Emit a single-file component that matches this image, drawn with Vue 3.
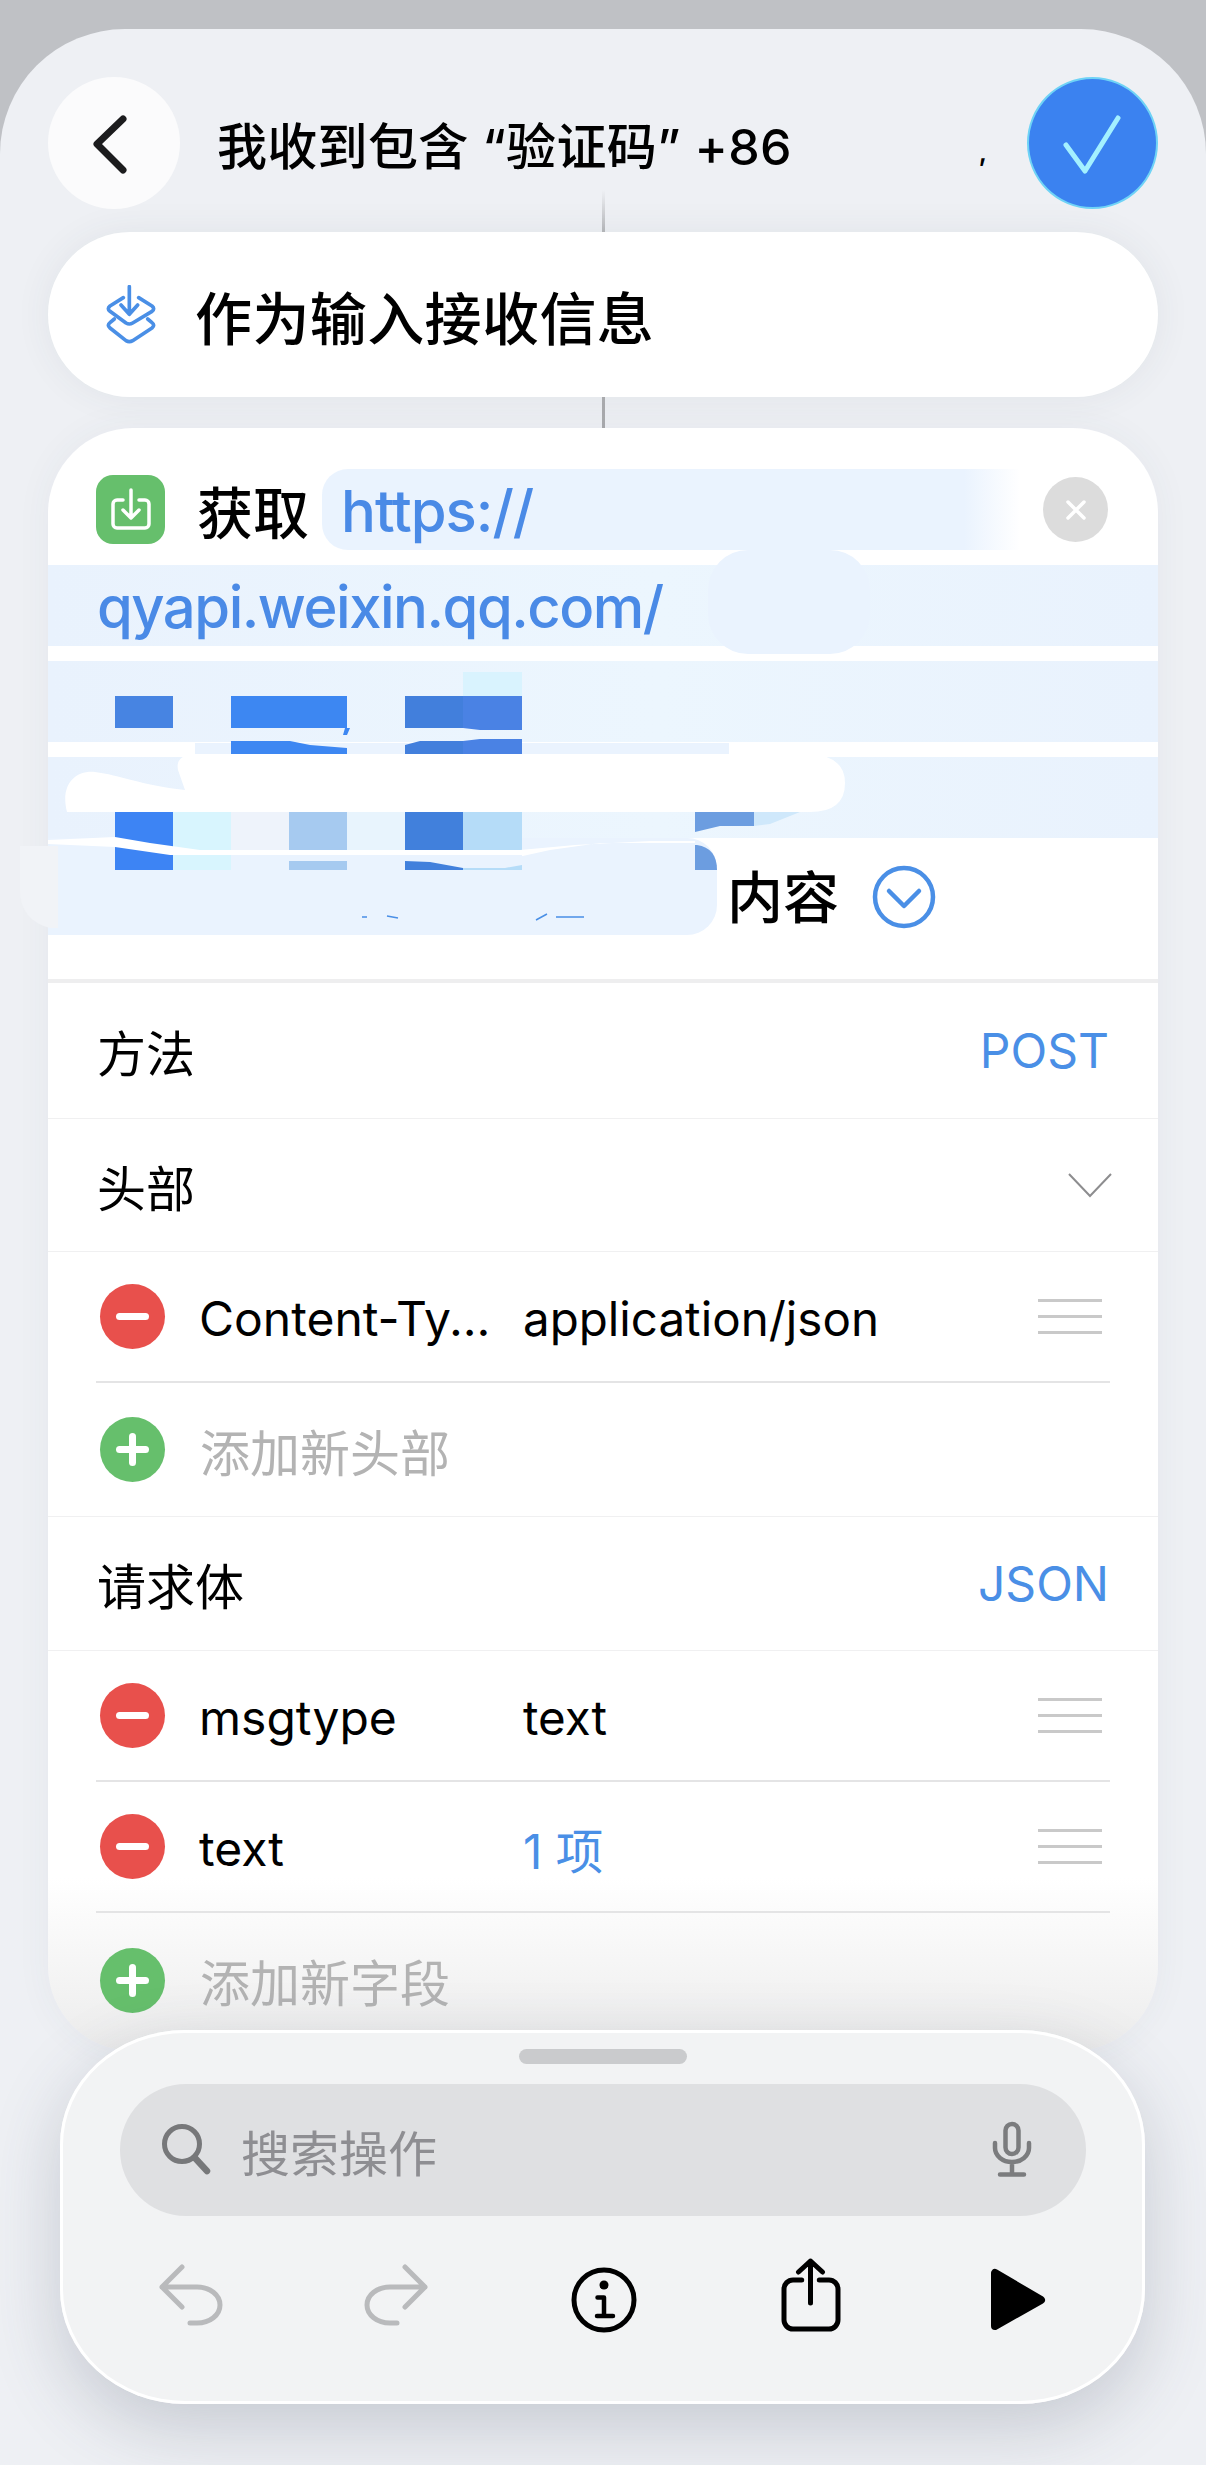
<template>
  <div class="page">
    <div class="panel">
      <header class="top">
        <button class="back">
          <svg width="44" height="64" viewBox="0 0 44 64"><path d="M31 8 5 33l26 26" class="line dark" stroke-width="7" /></svg>
        </button>
        <span class="title">我收到包含 “验证码” +86</span>
        <span class="mark">,</span>
        <button class="done">
          <svg width="70" height="70" viewBox="0 0 70 70"><path d="M8 37 27 63 60 10" class="line check" stroke-width="5" /></svg>
        </button>
      </header>
      <div class="link fade"></div>

      <div class="trigger">
        <svg class="stack" width="50" height="60" viewBox="80 40 150 180">
          <path d="M132 78 92 103q-10 8 0 16l48 35q10 6 20 0l58-35q10-8 0-16l-40-25M150 45v80M125 100l25 28 25-28" class="line blue" stroke-width="11" />
          <path d="M105 142 92 153q-10 8 0 16l48 38q10 6 20 0l58-38q10-8 0-16l-13-11" class="line blue" stroke-width="11" />
        </svg>
        <span>作为输入接收信息</span>
      </div>
      <div class="link"></div>

      <section class="card">
        <div class="url">
          <div class="url-head">
            <span class="app-icon">
              <svg width="46" height="46" viewBox="0 0 46 46">
                <path d="M15 13H9a4 4 0 0 0-4 4v20a4 4 0 0 0 4 4h28a4 4 0 0 0 4-4V17a4 4 0 0 0-4-4h-6M23 3v27M15 23l8 8 8-8" class="line white" stroke-width="3.5" />
              </svg>
            </span>
            <span class="verb">获取</span>
            <div class="pill-url">https://</div>
            <span class="clear">
              <svg width="30" height="30" viewBox="0 0 30 30"><path d="M7 7l16 16M23 7 7 23" class="line white" stroke-width="3.5" /></svg>
            </span>
          </div>
          <div class="band">qyapi.weixin.qq.com/</div>
          <div class="band"></div>
          <div class="band"></div>
          <div class="url-tail">
            <div class="blob"></div>
            <span class="verb tail-word">内容</span>
            <svg class="more" width="64" height="64" viewBox="0 0 64 64">
              <circle cx="32" cy="32" r="29" fill="none" stroke="#4a8fe6" stroke-width="4.5" />
              <path d="M17 26 32 41 47 26" class="line blue" stroke-width="4.5" />
            </svg>
          </div>
          <!-- 打码痕迹，盖在网址上面 -->
          <svg class="redact" width="1206" height="410" viewBox="0 540 1206 410">
            <rect x="708" y="550" width="162" height="104" rx="40" fill="#eaf3fe" />
            <path d="M20 846H58V928H50Q20 920 20 890Z" fill="#f1f3f7" />
            <rect x="195" y="743" width="534" height="12" fill="#eaf3fe" />
            <rect x="463" y="672" width="59" height="24" fill="#d9f3fe" />
            <rect x="115" y="696" width="58" height="32" fill="#4784e2" />
            <path d="M231 696H347V728L350 728 347 735H343L345 728H231Z" fill="#3d87f2" />
            <rect x="405" y="696" width="58" height="32" fill="#427fdc" />
            <path d="M463 696H522V730H480L463 728Z" fill="#4a82e4" />
            <path d="M231 741H290L310 745 347 748V754H231Z" fill="#3d87f2" />
            <path d="M405 745 420 741H463V754H405Z" fill="#427fdc" />
            <path d="M463 741 480 739H522V754H463Z" fill="#4a82e4" />
            <rect x="115" y="812" width="58" height="58" fill="#3d84f4" />
            <rect x="173" y="812" width="58" height="58" fill="#d8f5fe" />
            <rect x="231" y="812" width="58" height="38" fill="#eef3fb" />
            <rect x="289" y="812" width="58" height="58" fill="#a6caf0" />
            <rect x="347" y="812" width="58" height="38" fill="#e8f4fd" />
            <rect x="405" y="812" width="58" height="58" fill="#4180dc" />
            <rect x="463" y="812" width="59" height="58" fill="#b5dcf8" />
            <path d="M695 812H754V826H720L695 832Z" fill="#6c9de0" />
            <path d="M754 812H800L770 824 754 826Z" fill="#cfe8fb" />
            <path d="M695 845H697Q717 848 717 870H695Z" fill="#6c9de0" />
            <path d="M48 840 115 837 150 843 200 850H520L575 845 650 841H695V843H600L550 850 500 861H300V855H170L115 847 48 844Z" fill="#fff" />
            <rect x="231" y="855" width="58" height="15" fill="#eaf3fe" />
            <rect x="289" y="855" width="58" height="6" fill="#eaf3fe" />
            <rect x="347" y="855" width="58" height="15" fill="#eaf3fe" />
            <path d="M405 855H522V865L505 868H463L430 862 405 861Z" fill="#eaf3fe" />
            <path d="M67 812C60 785 75 770 95 772 120 775 140 785 185 790L178 770Q175 755 195 754H810Q845 756 845 783 845 812 810 812Z" fill="#fff" />
            <path d="M362 917h5M387 916l11 2M536 920l11-6M556 917h28" stroke="#4a8fe6" stroke-width="1.5" fill="none" />
          </svg>
        </div>

        <div class="row first">
          <span>方法</span>
          <span class="value">POST</span>
        </div>
        <div class="row">
          <span>头部</span>
          <svg class="fold" width="46" height="28" viewBox="0 0 46 28"><path d="M2 3 23 25 44 3" fill="none" stroke="#8d8d8f" stroke-width="2" /></svg>
        </div>
        <div v-for="h in headers" :key="h.name" class="item">
          <div class="item-in">
            <span class="dot red"><i></i></span>
            <span class="key">{{ h.name }}</span>
            <span class="val">{{ h.value }}</span>
            <span class="grip"><b></b><b></b><b></b></span>
          </div>
        </div>
        <div class="add">
          <span class="dot green"><i></i><i class="v"></i></span>
          <span class="hint">添加新头部</span>
        </div>
        <div class="row body-row">
          <span>请求体</span>
          <span class="value">JSON</span>
        </div>
        <div v-for="f in fields" :key="f.name" class="item">
          <div class="item-in">
            <span class="dot red"><i></i></span>
            <span class="key">{{ f.name }}</span>
            <span class="val" :class="{ link2: f.blue }">{{ f.value }}</span>
            <span class="grip"><b></b><b></b><b></b></span>
          </div>
        </div>
        <div class="add last">
          <span class="dot green"><i></i><i class="v"></i></span>
          <span class="hint">添加新字段</span>
        </div>
      </section>

      <section class="sheet">
        <div class="handle"></div>
        <div class="search">
          <svg width="60" height="60" viewBox="0 0 60 60">
            <circle cx="27" cy="24" r="17.5" fill="none" stroke="#77787a" stroke-width="5" />
            <path d="M40 38 52 51" class="line" stroke="#77787a" stroke-width="6.5" />
          </svg>
          <span class="search-text">搜索操作</span>
          <svg class="mic" width="60" height="60" viewBox="0 0 60 60">
            <rect x="23.5" y="4" width="13" height="30" rx="6.5" fill="none" stroke="#7b7c7e" stroke-width="4.5" />
            <path d="M13 23v5a17 14 0 0 0 34 0v-5M30 43v11M18 54.5h24" class="line" stroke="#7b7c7e" stroke-width="4.5" />
          </svg>
        </div>
        <div class="tools">
          <svg width="80" height="80" viewBox="0 0 80 80">
            <path d="M32 9 12 29l20 20M12 29h35c13 0 23 8 23 18s-10 18-23 18h-7" class="line gray" stroke-width="5" />
          </svg>
          <svg width="80" height="80" viewBox="0 0 80 80">
            <path d="M48 9l20 20-20 20M68 29H33C20 29 10 37 10 47s10 18 23 18h7" class="line gray" stroke-width="5" />
          </svg>
          <svg width="80" height="80" viewBox="0 0 80 80">
            <circle cx="40" cy="42" r="30" fill="none" stroke="#000" stroke-width="5" />
            <circle cx="40" cy="27" r="4.5" fill="#000" />
            <path d="M33.5 39.5H40V58M33 58H49" class="line black" stroke-width="4.5" />
          </svg>
          <svg width="80" height="80" viewBox="0 0 80 80">
            <path d="M30.7 22H22a9 9 0 0 0-9 9v31a9 9 0 0 0 9 9h36a9 9 0 0 0 9-9V31a9 9 0 0 0-9-9h-9.7M39.5 3v42M27.5 14l12-11 12 11" class="line black" stroke-width="5" />
          </svg>
          <svg width="80" height="80" viewBox="0 0 80 80">
            <path d="M17 15V68L63 42Z" fill="#000" stroke="#000" stroke-width="8" stroke-linejoin="round" />
          </svg>
        </div>
      </section>
    </div>
  </div>
</template>

<script setup>
const headers = [{ name: 'Content-Ty...', value: 'application/json' }]
const fields = [
  { name: 'msgtype', value: 'text' },
  { name: 'text', value: '1 项', blue: true },
]
</script>

<style scoped>
.page {
  width: 1206px;
  height: 2465px;
  padding-top: 29px;
  box-sizing: border-box;
  background: #bfc1c5;
  font-family: Inter, "Noto Sans CJK SC", sans-serif;
  color: #000;
  overflow: hidden;
}
.panel {
  height: 2436px;
  padding: 48px 48px 0;
  box-sizing: border-box;
  border-radius: 125px 125px 0 0;
  background: #eef0f4;
}
.line {
  fill: none;
  stroke-linecap: round;
  stroke-linejoin: round;
}
.dark { stroke: #1c1c1e; }
.check { stroke: #a3f0ff; }
.blue { stroke: #4a8fe6; }
.white { stroke: #fff; }
.gray { stroke: #b9babc; }
.black { stroke: #000; }

.top {
  display: flex;
  align-items: center;
  height: 132px;
}
.back,
.done {
  display: flex;
  align-items: center;
  justify-content: center;
  padding: 0;
  border: none;
  border-radius: 50%;
}
.back {
  width: 132px;
  height: 132px;
  background: #fbfbfc;
}
.title {
  margin-left: 37px;
  font-size: 50px;
  font-weight: 500;
  letter-spacing: 0.3px;
  white-space: nowrap;
}
.mark {
  margin-left: auto;
  margin-right: 40px;
  font-size: 26px;
  font-weight: 600;
  position: relative;
  top: 8px;
}
.done {
  width: 131px;
  height: 132px;
  box-sizing: border-box;
  background: #3b82f0;
  border: 2px solid #6fd3f6;
}
.link {
  width: 3px;
  height: 31px;
  margin: 0 auto;
  background: #a9aaad;
}
.link.fade {
  height: 42px;
  margin-top: -19px;
  background: linear-gradient(#eef0f4, #b6b7ba);
}
.trigger {
  display: flex;
  align-items: center;
  height: 165px;
  padding-left: 58px;
  box-sizing: border-box;
  border-radius: 82px;
  background: #fff;
  box-shadow: 0 0 36px rgba(60, 70, 90, 0.07);
  font-size: 57px;
  font-weight: 500;
  letter-spacing: 0.4px;
}
.stack {
  margin-right: 39px;
}

.card {
  height: 1623px;
  border-radius: 85px;
  background: linear-gradient(#fff 1450px, #ececec 1623px);
  box-shadow: 0 0 36px rgba(60, 70, 90, 0.05);
}
.url {
  position: relative;
  padding-top: 41px;
  box-sizing: border-box;
  border-bottom: 4px solid #eeeeef;
  height: 555px;
}
.url-head {
  display: flex;
  align-items: center;
  height: 81px;
  padding: 0 50px 0 48px;
}
.app-icon {
  display: flex;
  align-items: center;
  justify-content: center;
  flex: none;
  width: 69px;
  height: 69px;
  border-radius: 17px;
  background: #66bf6c;
}
.verb {
  font-size: 56px;
  font-weight: 500;
  white-space: nowrap;
}
.url-head .verb {
  margin-left: 32px;
}
.pill-url {
  width: 700px;
  height: 81px;
  margin-left: 13px;
  padding-left: 19px;
  box-sizing: border-box;
  border-radius: 26px 0 0 26px;
  background: linear-gradient(90deg, #eaf3fe 92%, #fff);
  color: #4a8ae6;
  font-size: 58px;
  font-weight: 500;
  letter-spacing: -1px;
  line-height: 84px;
}
.clear {
  display: flex;
  align-items: center;
  justify-content: center;
  flex: none;
  width: 65px;
  height: 65px;
  margin-left: 23px;
  border-radius: 50%;
  background: #dcdcdc;
}
.band {
  height: 81px;
  margin-top: 15px;
  padding-left: 49px;
  background: linear-gradient(90deg, #e9f2fd, #ecf6fe 55%, #e9f2fd);
  color: #4a8ae6;
  font-size: 58px;
  font-weight: 500;
  letter-spacing: -1.5px;
  line-height: 85px;
}
.url-tail {
  display: flex;
  align-items: flex-start;
}
.blob {
  flex: none;
  width: 669px;
  height: 97px;
  border-radius: 0 30px 30px 0;
  background: #eaf3fe;
}
.tail-word {
  margin-left: 10px;
  margin-top: 27px;
  line-height: 66px;
}
.more {
  margin: 27px 0 0 33px;
}
.redact {
  position: absolute;
  left: -48px;
  top: 112px;
  pointer-events: none;
}

.row,
.add {
  display: flex;
  align-items: center;
  justify-content: space-between;
  height: 133px;
  padding: 0 50px 0 49px;
  box-sizing: border-box;
  border-bottom: 1px solid #f0f0f1;
  font-size: 49px;
}
.first {
  height: 136px;
}
.value {
  color: #4a8fe6;
  font-size: 48px;
  margin-right: -1px;
}
.fold {
  margin-right: -5px;
}
.link2 {
  color: #4a8fe6;
}
.item {
  padding: 0 48px;
  height: 131px;
}
.item-in {
  display: flex;
  align-items: center;
  height: 100%;
  box-sizing: border-box;
  border-bottom: 2px solid #e4e4e5;
}
.dot {
  position: relative;
  flex: none;
  width: 65px;
  height: 65px;
  margin-left: 4px;
  border-radius: 50%;
}
.dot i {
  position: absolute;
  left: 16px;
  top: 29px;
  width: 33px;
  height: 7px;
  border-radius: 4px;
  background: #fff;
}
.dot i.v {
  left: 29px;
  top: 16px;
  width: 7px;
  height: 33px;
}
.red { background: #e8504c; }
.green { background: #66bf6c; }
.key {
  width: 324px;
  margin-left: 34px;
  padding-top: 3px;
  white-space: nowrap;
  font-size: 48px;
}
.val {
  padding-top: 3px;
  white-space: nowrap;
  font-size: 47.5px;
}
.grip {
  display: flex;
  flex-direction: column;
  gap: 13px;
  width: 64px;
  margin-left: auto;
  margin-right: 8px;
}
.grip b {
  height: 3px;
  background: #c9c9c9;
}
.add {
  justify-content: flex-start;
  height: 134px;
}
.add .dot {
  margin-left: 3px;
}
.add.last {
  border-bottom: none;
  background: transparent;
}
.hint {
  margin-left: 35px;
  color: #b3b3b3;
  font-size: 50px;
}
.body-row {
  height: 134px;
}

.sheet {
  position: relative;
  height: 374px;
  margin: -21px 13px 0 12px;
  border-radius: 125px / 115px;
  background: #f2f3f4;
  box-shadow: inset 0 0 0 3px #fff, 0 24px 70px rgba(60, 70, 90, 0.22);
  padding-top: 19px;
  box-sizing: border-box;
}
.handle {
  width: 168px;
  height: 15px;
  margin: 0 auto;
  border-radius: 8px;
  background: #cacbcd;
}
.search {
  display: flex;
  align-items: center;
  height: 132px;
  margin: 20px 59px 0 60px;
  padding: 0 44px 0 35px;
  border-radius: 66px;
  background: #dfe0e2;
}
.search-text {
  margin-left: 26px;
  color: #8e8e92;
  font-size: 49px;
}
.mic {
  margin-left: auto;
}
.tools {
  display: grid;
  grid-template-columns: repeat(5, 207px);
  justify-items: center;
  margin: 42px 0 0 26px;
}
</style>

<style>
html,
body {
  margin: 0;
}
</style>
